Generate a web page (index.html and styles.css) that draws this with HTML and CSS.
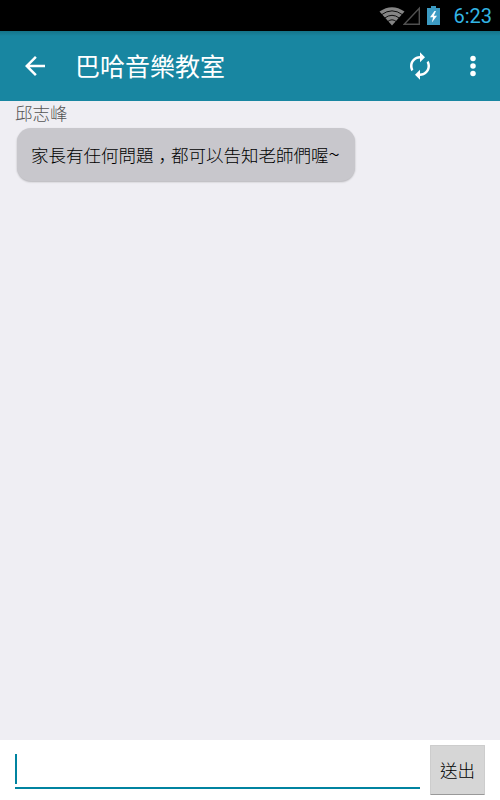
FILE: index.html
```
<!DOCTYPE html>
<html lang="zh-Hant">
<head>
  <meta charset="UTF-8">
  <title>巴哈音樂教室</title>
  <link rel="stylesheet" href="styles.css">
</head>
<body>
  <div class="status-bar">
    <svg class="wifi" width="26" height="20" viewBox="0 0 26 20">
      <path d="M0.5 5.5Q13 -3 25.5 5.5L13 19.5Z" fill="#858585"/>
      <path d="M2.5 8.7Q13 1 23.5 8.7M5.5 12.2Q13 6.4 20.5 12.2M8.6 15.6Q13 12 17.4 15.6" fill="none" stroke="#000" stroke-width="0.9"/>
    </svg>
    <svg class="signal" width="18" height="20" viewBox="0 0 18 20">
      <path d="M16.3 2.2V18.3H1.2Z" fill="none" stroke="#505050" stroke-width="1.4"/>
    </svg>
    <svg class="battery" width="13" height="20" viewBox="0 0 13 20">
      <path d="M4 0h5v2h4v17H0V2h4Z" fill="#3c9bc3"/>
      <path d="M7.5 5L3 11.3h3.1L4.9 16.5 10 9.8H6.8L9 5Z" fill="#fff"/>
    </svg>
    <span class="clock">6:23</span>
  </div>

  <header class="app-bar">
    <svg class="icon" viewBox="0 0 24 24">
      <path d="M20 11H7.83l5.59-5.59L12 4l-8 8 8 8 1.41-1.41L7.83 13H20v-2z"/>
    </svg>
    <h1>巴哈音樂教室</h1>
    <svg class="icon" viewBox="0 0 24 24">
      <path d="M12 6v3l4-4-4-4v3c-4.42 0-8 3.58-8 8 0 1.57.46 3.03 1.24 4.26L6.7 14.8c-.45-.83-.7-1.79-.7-2.8 0-3.31 2.69-6 6-6zm6.76 1.74L17.3 9.2c.44.84.7 1.79.7 2.8 0 3.31-2.69 6-6 6v-3l-4 4 4 4v-3c4.42 0 8-3.58 8-8 0-1.57-.46-3.03-1.24-4.26z"/>
    </svg>
    <svg class="icon more" viewBox="0 0 24 24">
      <circle cx="12" cy="6" r="2.2"/>
      <circle cx="12" cy="12" r="2.2"/>
      <circle cx="12" cy="18" r="2.2"/>
    </svg>
  </header>

  <main class="messages">
    <div class="sender">邱志峰</div>
    <div class="bubble">家長有任何問題<span class="comma" lang="zh-Hans">，</span>都可以告知老師們喔<span class="tilde">~</span></div>
  </main>

  <form class="composer">
    <div class="field"><span class="caret"></span></div>
    <button type="button">送出</button>
  </form>
</body>
</html>
```
FILE: styles.css
```
* {
  box-sizing: border-box;
}

body {
  margin: 0;
  height: 100vh;
  display: flex;
  flex-direction: column;
  background: #efeef3;
  font-family: "Noto Sans CJK TC", sans-serif;
  overflow: hidden;
}

.status-bar {
  height: 31px;
  flex: none;
  display: flex;
  align-items: center;
  justify-content: flex-end;
  padding-right: 8px;
  background: #000;
}

.wifi {
  margin-right: -2px;
}

.battery {
  margin: 0 13px 0 6px;
}

.clock {
  padding-top: 2px;
  font-family: Roboto, sans-serif;
  font-size: 20px;
  line-height: 31px;
  color: #33b5e5;
}

.app-bar {
  height: 70px;
  flex: none;
  display: flex;
  align-items: center;
  padding: 0 12px 0 20px;
  background: linear-gradient(#157489, #1886a1 5px);
}

.app-bar h1 {
  flex: 1;
  margin: 0 0 2px 25px;
  font-size: 25px;
  line-height: 36px;
  font-weight: 400;
  color: #fff;
}

.icon {
  width: 30px;
  height: 30px;
  fill: #fff;
}

.more {
  margin-left: 23px;
}

.messages {
  flex: 1;
  padding: 0 15px;
}

.sender {
  height: 27px;
  font-size: 17.5px;
  line-height: 23px;
  font-weight: 300;
  color: #555;
}

.bubble {
  width: 338px;
  height: 53px;
  margin-left: 2px;
  padding-left: 14px;
  border-radius: 14px;
  background: #c8c7cc;
  box-shadow: 0 1px 2px rgba(0, 0, 0, 0.25);
  font-size: 17.5px;
  line-height: 53px;
  font-weight: 300;
  color: #000;
  white-space: nowrap;
}

.comma {
  display: inline-block;
  width: 1em;
  padding-left: 5px;
  font-family: "Noto Sans CJK SC", sans-serif;
  font-feature-settings: "halt";
}

.tilde {
  font-size: 21px;
  line-height: 1;
}

.composer {
  height: 60px;
  flex: none;
  display: flex;
  padding: 5px 15px 5px;
  background: #fff;
}

.field {
  flex: 1;
  height: 44px;
  margin-right: 10px;
  padding-top: 9px;
  border-bottom: 2px solid #0083a0;
}

.caret {
  display: block;
  width: 2px;
  height: 30px;
  background: #0083a0;
}

.composer button {
  width: 55px;
  height: 50px;
  padding: 0 0 2px;
  border: 1px solid #cdcdcd;
  border-bottom: 1px solid #999;
  border-radius: 1px;
  background: #d6d6d6;
  font-family: inherit;
  font-size: 17.5px;
  font-weight: 300;
  color: #000;
}
```
